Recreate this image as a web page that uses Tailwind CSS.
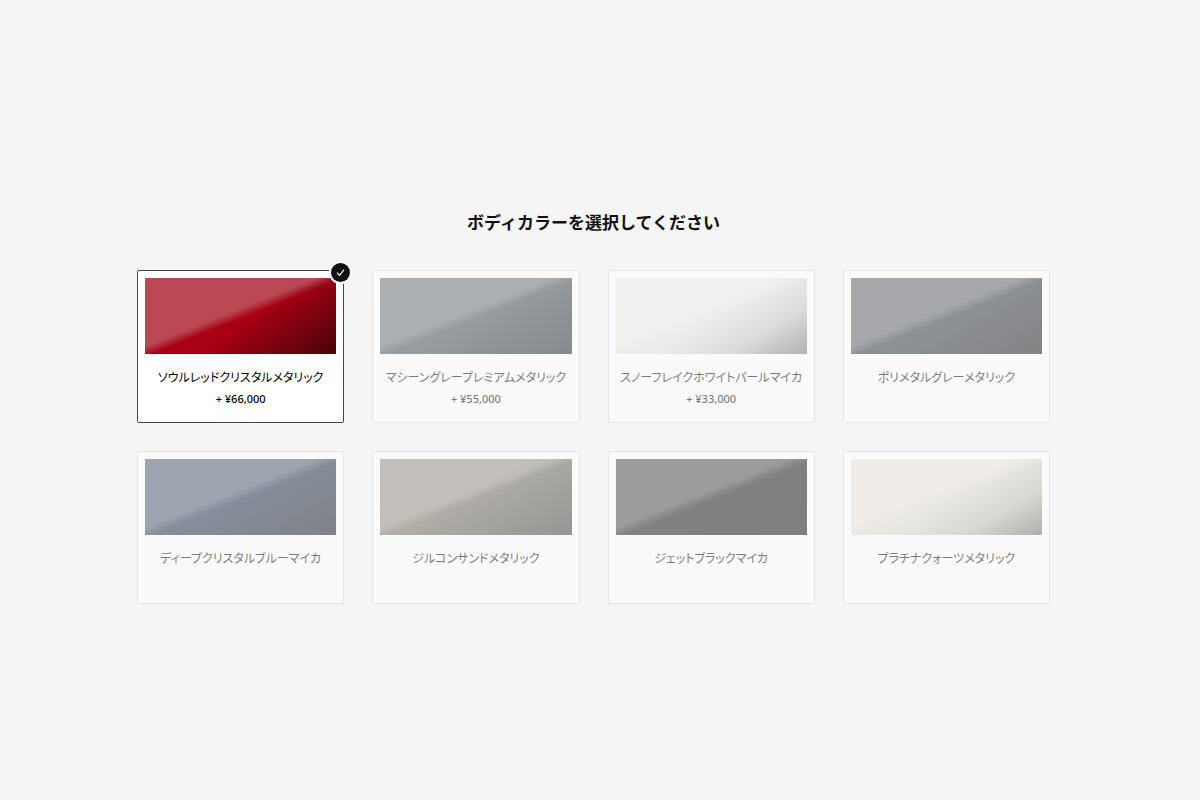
<!DOCTYPE html>
<html lang="ja">
<head>
    <meta charset="UTF-8">
    <meta name="viewport" content="width=device-width, initial-scale=1.0">
    <title>ボディカラー</title>
    <script src="https://cdn.jsdelivr.net/npm/@tailwindcss/browser@4"></script>
</head>
<body class="bg-[#f5f5f5] text-black font-['Noto_Sans','Noto_Sans_CJK_JP',sans-serif]">
    <form class="min-h-screen flex flex-col justify-center pt-3.5 pl-[137px] pr-[150px]">
        <h1 id="titulo" class="mb-9 text-center text-[17px] leading-6 font-bold font-['Noto_Sans_CJK_JP',sans-serif] text-[#111]">ボディカラーを選択してください</h1>

        <div class="grid grid-cols-4 gap-7" role="radiogroup" aria-labelledby="titulo">
            <label class="group relative min-h-[153px] p-[7px] bg-white border border-[#d4d4d4] rounded-xs text-center text-[11px] cursor-pointer opacity-50 has-checked:opacity-100 has-checked:border-[#444]">
                <input class="sr-only" type="radio" name="cor" value="soul-red" checked>
                <span class="block h-[76px] bg-linear-145 from-[#a80014] from-54% to-[#4a0309]">
                    <span class="block h-full bg-linear-to-br from-[#dcdcd2]/33 from-45% to-transparent to-52%"></span>
                </span>
                <span class="block mt-[15px] text-xs leading-4 font-['Noto_Sans_CJK_JP',sans-serif] [font-feature-settings:'palt']">ソウルレッドクリスタルメタリック</span>
                <span class="block mt-[6px] leading-4 font-medium">+ ¥66,000</span>
                <span class="hidden group-has-checked:flex absolute -top-[8px] -right-[7px] size-[19px] items-center justify-center rounded-full bg-[#111] ring-2 ring-white">
                    <svg class="size-[9px]" viewBox="0 0 9 9" fill="none" stroke="white" stroke-width="1.1"><path d="M1 4.6 3.6 7.4 8 1.6" /></svg>
                </span>
            </label>

            <label class="group relative min-h-[153px] p-[7px] bg-white border border-[#d4d4d4] rounded-xs text-center text-[11px] cursor-pointer opacity-50 has-checked:opacity-100 has-checked:border-[#444]">
                <input class="sr-only" type="radio" name="cor" value="machine-gray">
                <span class="block h-[76px] bg-linear-150 from-[#3b454b] from-50% to-[#1b2227]">
                    <span class="block h-full bg-linear-to-br from-[#fff8ff]/21 from-45% to-transparent to-52%"></span>
                </span>
                <span class="block mt-[15px] text-xs leading-4 font-['Noto_Sans_CJK_JP',sans-serif] [font-feature-settings:'palt']">マシーングレープレミアムメタリック</span>
                <span class="block mt-[6px] leading-4 font-medium">+ ¥55,000</span>
                <span class="hidden group-has-checked:flex absolute -top-[8px] -right-[7px] size-[19px] items-center justify-center rounded-full bg-[#111] ring-2 ring-white">
                    <svg class="size-[9px]" viewBox="0 0 9 9" fill="none" stroke="white" stroke-width="1.1"><path d="M1 4.6 3.6 7.4 8 1.6" /></svg>
                </span>
            </label>

            <label class="group relative min-h-[153px] p-[7px] bg-white border border-[#d4d4d4] rounded-xs text-center text-[11px] cursor-pointer opacity-50 has-checked:opacity-100 has-checked:border-[#444]">
                <input class="sr-only" type="radio" name="cor" value="snowflake-white">
                <span class="block h-[76px] bg-linear-150 from-[#e9e7e4] from-50% via-[#c4c3c2] via-75% to-[#707070]">
                    <span class="block h-full bg-linear-to-br from-white/20 from-45% to-transparent to-52%"></span>
                </span>
                <span class="block mt-[15px] text-xs leading-4 font-['Noto_Sans_CJK_JP',sans-serif] [font-feature-settings:'palt']">スノーフレイクホワイトパールマイカ</span>
                <span class="block mt-[6px] leading-4 font-medium">+ ¥33,000</span>
                <span class="hidden group-has-checked:flex absolute -top-[8px] -right-[7px] size-[19px] items-center justify-center rounded-full bg-[#111] ring-2 ring-white">
                    <svg class="size-[9px]" viewBox="0 0 9 9" fill="none" stroke="white" stroke-width="1.1"><path d="M1 4.6 3.6 7.4 8 1.6" /></svg>
                </span>
            </label>

            <label class="group relative min-h-[153px] p-[7px] bg-white border border-[#d4d4d4] rounded-xs text-center text-[11px] cursor-pointer opacity-50 has-checked:opacity-100 has-checked:border-[#444]">
                <input class="sr-only" type="radio" name="cor" value="polymetal-gray">
                <span class="block h-[76px] bg-linear-150 from-[#272f37] from-50% to-[#151519]">
                    <span class="block h-full bg-linear-to-br from-[#fff8ff]/23 from-45% to-transparent to-52%"></span>
                </span>
                <span class="block mt-[15px] text-xs leading-4 font-['Noto_Sans_CJK_JP',sans-serif] [font-feature-settings:'palt']">ポリメタルグレーメタリック</span>
                <span class="hidden group-has-checked:flex absolute -top-[8px] -right-[7px] size-[19px] items-center justify-center rounded-full bg-[#111] ring-2 ring-white">
                    <svg class="size-[9px]" viewBox="0 0 9 9" fill="none" stroke="white" stroke-width="1.1"><path d="M1 4.6 3.6 7.4 8 1.6" /></svg>
                </span>
            </label>

            <label class="group relative min-h-[153px] p-[7px] bg-white border border-[#d4d4d4] rounded-xs text-center text-[11px] cursor-pointer opacity-50 has-checked:opacity-100 has-checked:border-[#444]">
                <input class="sr-only" type="radio" name="cor" value="deep-crystal-blue">
                <span class="block h-[76px] bg-linear-150 from-[#172944] from-50% to-[#0e121c]">
                    <span class="block h-full bg-linear-to-br from-[#fff8ff]/22 from-45% to-transparent to-52%"></span>
                </span>
                <span class="block mt-[15px] text-xs leading-4 font-['Noto_Sans_CJK_JP',sans-serif] [font-feature-settings:'palt']">ディープクリスタルブルーマイカ</span>
                <span class="hidden group-has-checked:flex absolute -top-[8px] -right-[7px] size-[19px] items-center justify-center rounded-full bg-[#111] ring-2 ring-white">
                    <svg class="size-[9px]" viewBox="0 0 9 9" fill="none" stroke="white" stroke-width="1.1"><path d="M1 4.6 3.6 7.4 8 1.6" /></svg>
                </span>
            </label>

            <label class="group relative min-h-[153px] p-[7px] bg-white border border-[#d4d4d4] rounded-xs text-center text-[11px] cursor-pointer opacity-50 has-checked:opacity-100 has-checked:border-[#444]">
                <input class="sr-only" type="radio" name="cor" value="zircon-sand">
                <span class="block h-[76px] bg-linear-150 from-[#70695d] from-45% to-[#383936]">
                    <span class="block h-full bg-linear-to-br from-white/23 from-45% to-transparent to-52%"></span>
                </span>
                <span class="block mt-[15px] text-xs leading-4 font-['Noto_Sans_CJK_JP',sans-serif] [font-feature-settings:'palt']">ジルコンサンドメタリック</span>
                <span class="hidden group-has-checked:flex absolute -top-[8px] -right-[7px] size-[19px] items-center justify-center rounded-full bg-[#111] ring-2 ring-white">
                    <svg class="size-[9px]" viewBox="0 0 9 9" fill="none" stroke="white" stroke-width="1.1"><path d="M1 4.6 3.6 7.4 8 1.6" /></svg>
                </span>
            </label>

            <label class="group relative min-h-[153px] p-[7px] bg-white border border-[#d4d4d4] rounded-xs text-center text-[11px] cursor-pointer opacity-50 has-checked:opacity-100 has-checked:border-[#444]">
                <input class="sr-only" type="radio" name="cor" value="jet-black">
                <span class="block h-[76px] bg-linear-150 from-[#101012] from-50% to-[#0a0a0a]">
                    <span class="block h-full bg-linear-to-br from-white/22 from-45% to-transparent to-52%"></span>
                </span>
                <span class="block mt-[15px] text-xs leading-4 font-['Noto_Sans_CJK_JP',sans-serif] [font-feature-settings:'palt']">ジェットブラックマイカ</span>
                <span class="hidden group-has-checked:flex absolute -top-[8px] -right-[7px] size-[19px] items-center justify-center rounded-full bg-[#111] ring-2 ring-white">
                    <svg class="size-[9px]" viewBox="0 0 9 9" fill="none" stroke="white" stroke-width="1.1"><path d="M1 4.6 3.6 7.4 8 1.6" /></svg>
                </span>
            </label>

            <label class="group relative min-h-[153px] p-[7px] bg-white border border-[#d4d4d4] rounded-xs text-center text-[11px] cursor-pointer opacity-50 has-checked:opacity-100 has-checked:border-[#444]">
                <input class="sr-only" type="radio" name="cor" value="platinum-quartz">
                <span class="block h-[76px] bg-linear-150 from-[#dedcd2] from-50% via-[#bdbcb4] via-75% to-[#6c6c68]">
                    <span class="block h-full bg-linear-to-br from-[#f4e8e2]/60 from-45% to-transparent to-52%"></span>
                </span>
                <span class="block mt-[15px] text-xs leading-4 font-['Noto_Sans_CJK_JP',sans-serif] [font-feature-settings:'palt']">プラチナクォーツメタリック</span>
                <span class="hidden group-has-checked:flex absolute -top-[8px] -right-[7px] size-[19px] items-center justify-center rounded-full bg-[#111] ring-2 ring-white">
                    <svg class="size-[9px]" viewBox="0 0 9 9" fill="none" stroke="white" stroke-width="1.1"><path d="M1 4.6 3.6 7.4 8 1.6" /></svg>
                </span>
            </label>
        </div>
    </form>
</body>
</html>
